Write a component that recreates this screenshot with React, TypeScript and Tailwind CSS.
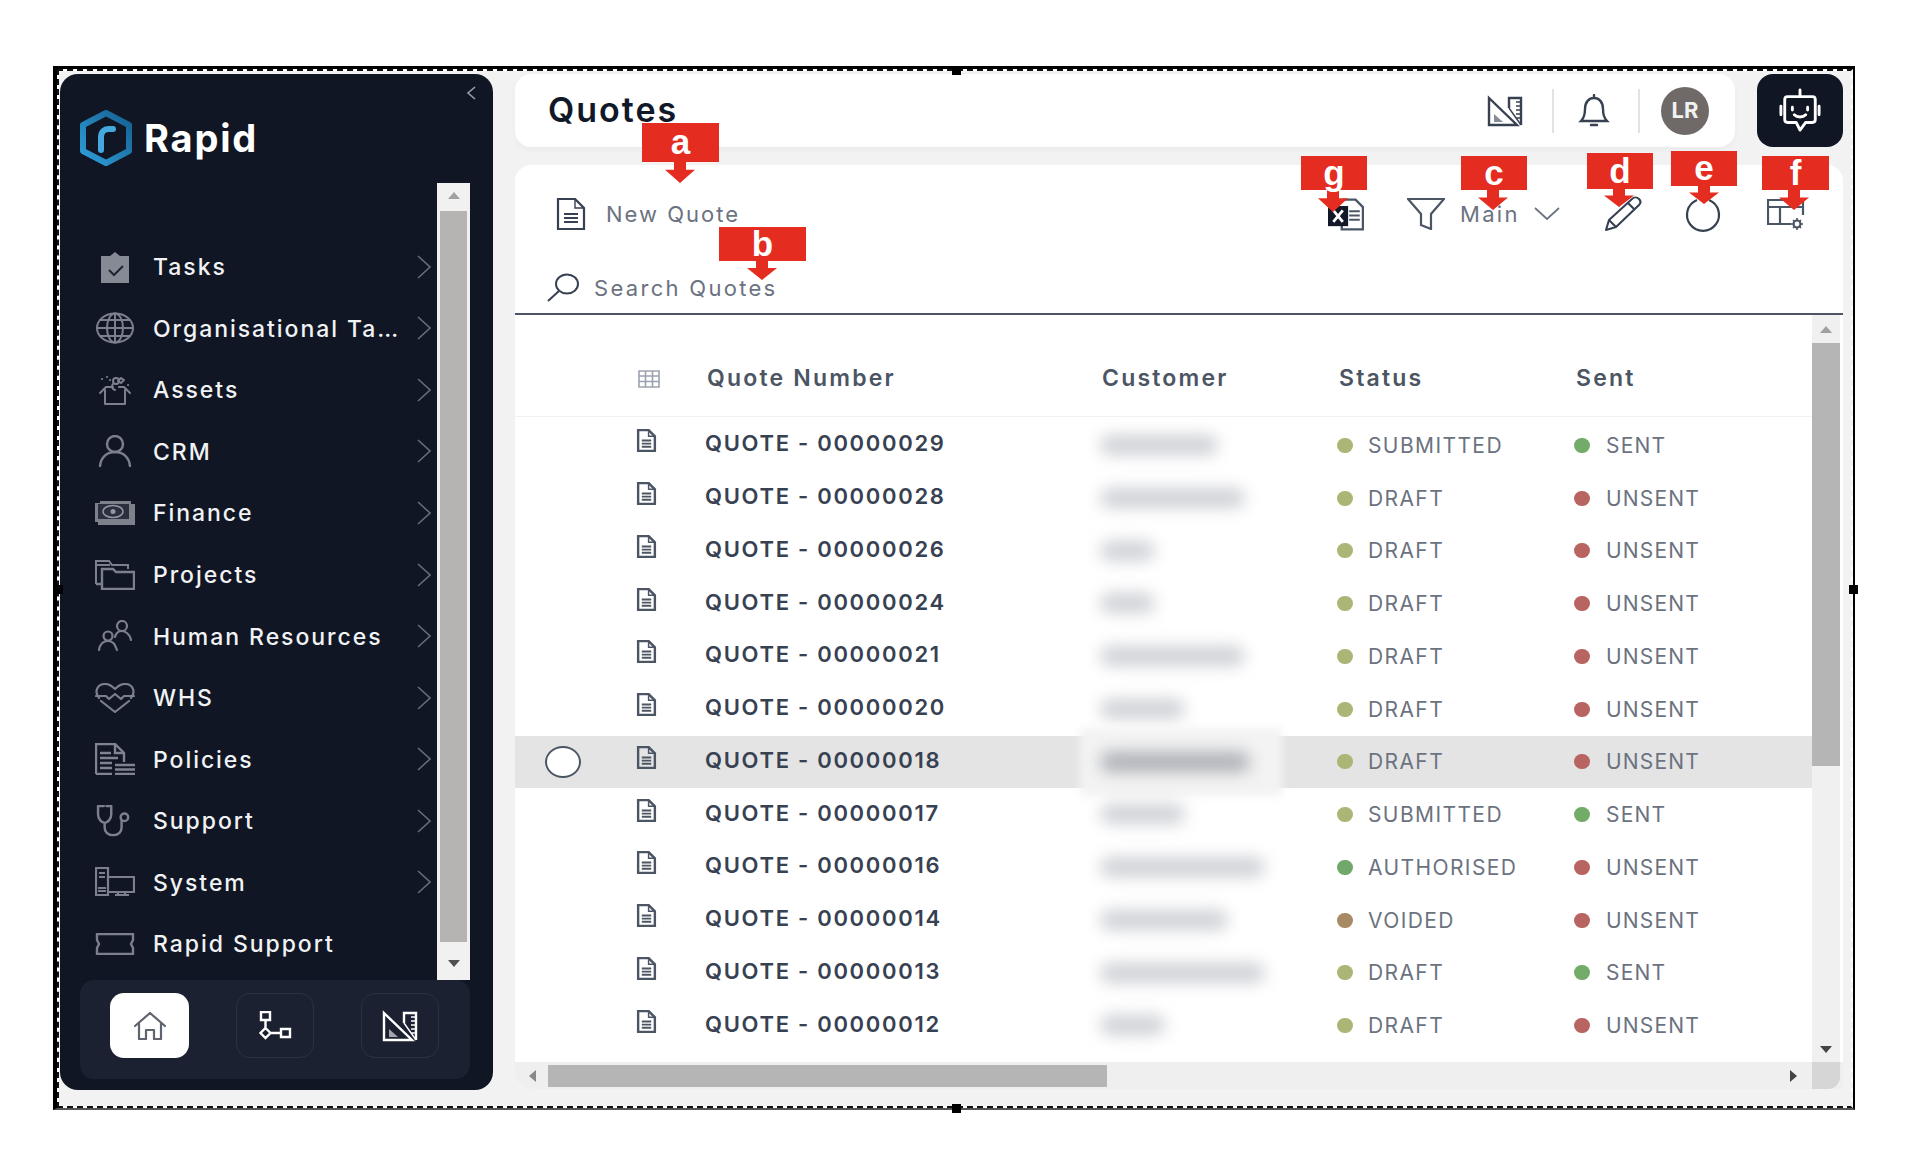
import React from "react";

const S = (p: React.SVGProps<SVGSVGElement>) => <svg fill="none" stroke="currentColor" strokeWidth={2} strokeLinecap="round" strokeLinejoin="round" {...p} />;

const Ruler = ({ c = "currentColor", w = 36, h = 32 }: { c?: string; w?: number; h?: number }) => (
  <S viewBox="0 0 36 32" width={w} height={h} stroke={c} strokeLinecap="butt" strokeLinejoin="miter">
    <path d="M2 3 30 30H2Z" strokeWidth={2.4} />
    <path d="M7 19 16 27H7Z" fill={c} opacity={0.6} stroke="none" />
    <path d="M22 13V3H34V30" strokeWidth={2.4} />
    <path d="M22 13 34 30M29 7h5M29 11h5M29 15h5M29 19h5M29 23h5" strokeWidth={1.4} />
  </S>
);

const icons: Record<string, React.ReactNode> = {
  Tasks: (
    <svg viewBox="0 0 32 32" width={32} height={32}>
      <path d="M2 5h9l5-4 5 4h9v27H2Z" fill="#858a95" />
      <path d="M10 19l5 5 9-9" fill="none" stroke="#1d2433" strokeWidth={2} />
    </svg>
  ),
  Org: (
    <S viewBox="0 0 40 32" width={40} height={32}>
      <ellipse cx="20" cy="16" rx="18" ry="14.5" />
      <ellipse cx="20" cy="16" rx="8" ry="14.5" />
      <path d="M2 16h36M5 8h30M5 24h30M20 1.5v29" />
    </S>
  ),
  Assets: (
    <S viewBox="0 0 36 32" width={36} height={32}>
      <path d="M8 16v14h20V16M3 19l6-6h7M33 19l-6-6h-5" />
      <circle cx="19" cy="7" r="3" />
      <path d="M16 10c-2 2-1 5 2 6M24 4l3 2-3 3-3-2ZM5 5h.1M10 3h.1M31 11h.1M13 6h.1" />
    </S>
  ),
  CRM: (
    <S viewBox="0 0 36 32" width={36} height={32} strokeWidth={2.4}>
      <circle cx="18" cy="9" r="8" />
      <path d="M3 31c1-9 7-14 15-14s14 5 15 14" />
    </S>
  ),
  Finance: (
    <svg viewBox="0 0 40 24" width={40} height={24}>
      <path d="M5 0h31v3h4v21H3v-3H0V2h5Z" fill="#7c818c" />
      <rect x="3" y="3" width="31" height="15" fill="#2a3040" />
      <ellipse cx="18" cy="10.5" rx="10" ry="6" fill="none" stroke="#9297a2" strokeWidth={1.5} />
      <circle cx="18" cy="10.5" r="2.5" fill="#9297a2" />
    </svg>
  ),
  Projects: (
    <S viewBox="0 0 40 30" width={40} height={30} strokeLinecap="butt" strokeLinejoin="miter">
      <path d="M1 24V1h13l3 4h16v4M1 5h14" />
      <path d="M7 29V9h11l3 3h18v17ZM1 24h6" strokeWidth={2.4} />
    </S>
  ),
  HR: (
    <S viewBox="0 0 36 32" width={36} height={32} strokeWidth={2.2}>
      <circle cx="25" cy="6" r="5" />
      <path d="M18 17c1-4 4-6 7-6s8 3 9 9" />
      <circle cx="11" cy="16" r="4.5" />
      <path d="M2 30c1-6 4-9 9-9s7 3 9 9" />
    </S>
  ),
  WHS: (
    <S viewBox="0 0 40 30" width={40} height={30} strokeWidth={2.2}>
      <path d="M4 15C-1 9 2 1 10 1c5 0 8 3 10 5 2-2 5-5 10-5 8 0 11 8 6 14" />
      <path d="M1 13h10l3 3 6-5 6 5 3-3h10M6 18l14 11 14-11" />
    </S>
  ),
  Policies: (
    <svg viewBox="0 0 40 32" width={40} height={32} fill="none" stroke="#7f8490" strokeWidth={2.4}>
      <path d="M1 31V1h19l9 9v9" />
      <path d="M20 1v9h9" />
      <path d="M5 10h11M5 15h18M5 20h12M5 25h12M1 31h16" />
      <path d="M20 22h20M20 26.5h20M20 31h20" strokeWidth={2.6} />
    </svg>
  ),
  Support: (
    <S viewBox="0 0 40 34" width={38} height={32} strokeWidth={2.6}>
      <path d="M8 1H2v9c0 5 4 9 7 9s7-4 7-9V1h-5" />
      <path d="M9 19v5c0 4 3 8 9 8s9-4 9-8v-7" />
      <circle cx="30" cy="13" r="4" />
    </S>
  ),
  System: (
    <S viewBox="0 0 40 30" width={40} height={30} strokeLinecap="butt" strokeLinejoin="miter" strokeWidth={2.2}>
      <path d="M1 1h12v27H1ZM4 6h6M4 10h6M3 21h8M3 24h8" />
      <path d="M13 10h26v15H13M20 28h14M23 25v3M30 25v3" />
    </S>
  ),
  Rapid: (
    <S viewBox="0 0 40 22" width={40} height={22} strokeLinecap="butt" strokeLinejoin="miter" strokeWidth={2.4}>
      <path d="M2 1h36v6l-2 4 2 4v6H2v-6l2-4-2-4Z" />
    </S>
  ),
};

const menu: [string, string, boolean][] = [
  ["Tasks", "Tasks", true],
  ["Org", "Organisational Ta…", true],
  ["Assets", "Assets", true],
  ["CRM", "CRM", true],
  ["Finance", "Finance", true],
  ["Projects", "Projects", true],
  ["HR", "Human Resources", true],
  ["WHS", "WHS", true],
  ["Policies", "Policies", true],
  ["Support", "Support", true],
  ["System", "System", true],
  ["Rapid", "Rapid Support", false],
];

const rows: [string, number, string, string][] = [
  ["00000029", 118, "SUBMITTED", "SENT"],
  ["00000028", 145, "DRAFT", "UNSENT"],
  ["00000026", 55, "DRAFT", "UNSENT"],
  ["00000024", 55, "DRAFT", "UNSENT"],
  ["00000021", 145, "DRAFT", "UNSENT"],
  ["00000020", 85, "DRAFT", "UNSENT"],
  ["00000018", 150, "DRAFT", "UNSENT"],
  ["00000017", 85, "SUBMITTED", "SENT"],
  ["00000016", 165, "AUTHORISED", "UNSENT"],
  ["00000014", 128, "VOIDED", "UNSENT"],
  ["00000013", 165, "DRAFT", "SENT"],
  ["00000012", 65, "DRAFT", "UNSENT"],
];

const Doc = () => (
  <svg viewBox="0 0 20 22" width={21} height={23} fill="none" stroke="#4b5563" strokeWidth={2.3}>
    <path d="M2 1h10l6 6v14H2Z" />
    <path d="M12 1v6h6" strokeWidth={1.4} />
    <path d="M5.5 11h9M5.5 14h9M5.5 17h9" strokeWidth={1.8} />
  </svg>
);

const Tag = ({ label, x, y, w, h, tip, tipX }: { label: string; x: number; y: number; w: number; h: number; tip: number; tipX: number }) => (
  <div className="absolute z-10" style={{ left: x, top: y, width: w, height: tip - y }}>
    <div className="flex items-center justify-center bg-[#e42c20] text-white font-bold text-[35px] leading-none font-['Liberation_Sans',sans-serif]" style={{ height: h }}>
      <span className="relative z-10 -mt-[2px]">{label}</span>
    </div>
    <svg className="absolute" style={{ left: tipX - x - 15, top: h - 1 }} width={30} height={tip - y - h + 1} viewBox="0 0 30 20" preserveAspectRatio="none">
      <path d="M9 0h12v8h9L15 20 0 8h9Z" fill="#e42c20" />
    </svg>
  </div>
);

const Handle = ({ cls }: { cls: string }) => <div className={`absolute z-20 h-[9px] w-[9px] bg-black ${cls}`} />;

const Tri = ({ d, c = "#6b6b6b" }: { d: "u" | "d" | "l" | "r"; c?: string }) => {
  const p = { u: "M0 8 6 1l6 7Z", d: "M0 2h12L6 9Z", l: "M9 0v12L2 6Z", r: "M2 0v12l7-6Z" }[d];
  return (
    <svg width={12} height={12} viewBox="0 0 12 12">
      <path d={p} fill={c} />
    </svg>
  );
};

export default function App() {
  return (
    <div className="h-[1168px] w-[1914px] overflow-hidden bg-white pl-[53px] pt-[66px] font-['Inter',sans-serif]">
      <div className="relative h-[1044px] w-[1802px] border-b-[2px] border-l-[4px] border-r-[2px] border-t-[3px] border-b-[#555] border-l-black border-r-black border-t-black">
        <Handle cls="left-[895px] -top-[3px]" />
        <Handle cls="-left-[3px] top-[516px]" />
        <Handle cls="-right-[5px] top-[516px]" />
        <Handle cls="left-[895px] -bottom-[5px]" />
        <Tag label="a" x={585} y={54} w={77} h={39} tip={114} tipX={623} />
        <Tag label="b" x={662} y={158} w={87} h={34} tip={211} tipX={705} />
        <Tag label="g" x={1244} y={87} w={66} h={34} tip={143} tipX={1276} />
        <Tag label="c" x={1404} y={87} w={66} h={34} tip={141} tipX={1436} />
        <Tag label="d" x={1530} y={84} w={66} h={36} tip={138} tipX={1562} />
        <Tag label="e" x={1614} y={82} w={66} h={35} tip={135} tipX={1647} />
        <Tag label="f" x={1705} y={87} w={67} h={34} tip={141} tipX={1737} />

        <div className="flex h-full w-full gap-[22px] border-2 border-dashed border-[#111] border-r-[#f2f2f2] bg-[#f2f2f2] bg-clip-padding pl-[1px] pt-[3px]">
          {/* Sidebar */}
          <aside className="flex h-[1016px] w-[433px] shrink-0 flex-col rounded-[18px] bg-[#101624] text-[#f1f2f4]">
            <div className="relative flex h-[109px] shrink-0 items-start pl-[19px] pt-[36px]">
              <svg className="absolute right-[16px] top-[11px] text-[#9aa0aa]" width={12} height={16} viewBox="0 0 12 16" fill="none" stroke="currentColor" strokeWidth={1.6}>
                <path d="M10 2 3 8l7 6" />
              </svg>
              <svg width={54} height={56} viewBox="0 0 54 56" fill="none">
                <defs>
                  <linearGradient id="lg" x1="0" y1="1" x2="1" y2="0">
                    <stop offset="0" stopColor="#2f9ed8" />
                    <stop offset="1" stopColor="#155f92" />
                  </linearGradient>
                </defs>
                <path d="M27 3 50 15v26L27 53 4 41V15Z" stroke="url(#lg)" strokeWidth={6} strokeLinejoin="round" />
                <path d="M22 40V27c0-6 4-8 8-8h4" stroke="#45a9de" strokeWidth={6} strokeLinecap="round" />
              </svg>
              <span className="ml-[11px] mt-[6px] text-[38px] font-bold leading-[44px] tracking-[1.8px] text-white">Rapid</span>
            </div>
            <div className="flex min-h-0 flex-1">
              <nav className="min-w-0 flex-1 pt-[53px]">
                {menu.map(([k, label, arrow]) => (
                  <div key={k} className="flex h-[61.55px] items-center pl-[32px] pr-[6px]">
                    <div className="flex w-[45px] shrink-0 items-center justify-center text-[#7b808c]">{icons[k]}</div>
                    <span className="ml-[16px] mt-[2px] whitespace-nowrap text-[23px] font-medium leading-none tracking-[1.95px]">{label}</span>
                    {arrow && (
                      <svg className="ml-auto shrink-0 text-[#666c78]" width={14} height={24} viewBox="0 0 14 24" fill="none" stroke="currentColor" strokeWidth={1.6}>
                        <path d="M1 1l12 11L1 23" />
                      </svg>
                    )}
                  </div>
                ))}
              </nav>
              <div className="mr-[23px] flex w-[33px] shrink-0 flex-col items-center bg-[#f1f1f1]">
                <div className="flex h-[28px] items-center"><Tri d="u" c="#a0a0a0" /></div>
                <div className="h-[731px] w-[27px] bg-[#b5b4b3]" />
                <div className="flex flex-1 items-center pt-[6px]"><Tri d="d" c="#505050" /></div>
              </div>
            </div>
            <div className="mb-[11px] ml-[20px] flex h-[99px] w-[390px] shrink-0 items-start gap-[47px] rounded-[14px] bg-[#1b2130] pl-[30px] pt-[13px]">
              <div className="flex h-[65px] w-[79px] items-center justify-center rounded-[14px] bg-white text-[#5f6470]">
                <S viewBox="0 0 32 28" width={32} height={28} strokeWidth={2.2}>
                  <path d="M1 14 16 1l15 13M5 11v16h7v-9h8v9h7V11" />
                </S>
              </div>
              <div className="flex h-[65px] w-[78px] items-center justify-center rounded-[14px] border border-[#2b3140] text-white">
                <S viewBox="0 0 34 30" width={34} height={30} strokeWidth={2.4} strokeLinecap="butt" strokeLinejoin="miter">
                  <path d="M3 1h9v8H3ZM7.5 9v8M7.5 17l5 5-5 5-5-5ZM12.5 22H23M23 18h9v8h-9Z" />
                </S>
              </div>
              <div className="flex h-[65px] w-[78px] items-center justify-center rounded-[14px] border border-[#2b3140] text-white">
                <Ruler />
              </div>
            </div>
          </aside>

          {/* Main */}
          <div className="flex w-[1328px] shrink-0 flex-col gap-[18px]">
            <div className="flex h-[73px] gap-[22px]">
              <header className="flex w-[1220px] items-center rounded-[16px] bg-white pl-[33px] shadow-[0_3px_6px_rgba(0,0,0,0.03)]">
                <h1 className="-mt-[2px] text-[34px] font-semibold leading-none tracking-[2px] text-[#111827]">Quotes</h1>
                <div className="ml-auto text-[#374151]"><Ruler /></div>
                <div className="ml-[29px] h-[44px] w-[2px] bg-[#e2e2e2]" />
                <svg className="ml-[24px] text-[#374151]" width={32} height={34} viewBox="0 0 32 34" fill="none" stroke="currentColor" strokeWidth={2.4}>
                  <path d="M16 1v3M3 27c3-3 4-6 4-12 0-7 4-11 9-11s9 4 9 11c0 6 1 9 4 12ZM13 31h6" strokeLinecap="round" />
                </svg>
                <div className="ml-[28px] h-[44px] w-[2px] bg-[#e2e2e2]" />
                <div className="ml-[21px] flex h-[48px] w-[48px] items-center justify-center rounded-full bg-[#6f6a68] text-[22px] font-bold text-[#f1f1f1]">LR</div>
                <div className="w-[26px]" />
              </header>
              <div className="flex w-[86px] items-center justify-center rounded-[16px] bg-[#101624]">
                <S viewBox="0 0 44 48" width={42} height={46} className="text-white" strokeWidth={3}>
                  <path d="M22 2v7M9 9h26c2 0 3 1 3 3v21c0 2-1 3-3 3h-7l-6 8-4-8H9c-2 0-3-1-3-3V12c0-2 1-3 3-3Z" />
                  <path d="M2 19v9M42 19v9M14 20v3M30 20v3M16 28c3 3 9 3 12 0" />
                </S>
              </div>
            </div>

            <section className="flex h-[924px] flex-col rounded-[16px] bg-white">
              <div className="h-[150px] shrink-0 border-b-2 border-[#4b5563]">
                <div className="flex h-[98px] items-center">
                  <svg className="ml-[41px]" width={30} height={32} viewBox="0 0 30 32" fill="none" stroke="#374151" strokeWidth={2.2}>
                    <path d="M2 1h17l9 9v21H2Z" />
                    <path d="M19 1v9h9" strokeWidth={1.4} />
                    <path d="M8 16h14M8 20h14M8 24h14" />
                  </svg>
                  <span className="ml-[20px] w-[136px] whitespace-nowrap text-[22px] leading-none tracking-[2px] text-[#6b7280]">New Quote</span>
                  <svg className="ml-[586px] text-[#1f2937]" width={36} height={33} viewBox="0 0 34 30" fill="none">
                    <path d="M14 1h12l7 7v21H13v-6" stroke="#4b5563" strokeWidth={2.2} />
                    <path d="M20 12h10M20 16h10M20 20h10" stroke="#4b5563" strokeWidth={1.8} />
                    <rect x="0" y="7" width="19" height="19" fill="#111827" />
                    <path d="M5 11l9 11M14 11l-9 11" stroke="#fff" strokeWidth={2.6} />
                  </svg>
                  <svg className="ml-[43px] text-[#4b5563]" width={38} height={32} viewBox="0 0 38 32" fill="none" stroke="currentColor" strokeWidth={2.2}>
                    <path d="M1 1h36L24 16v15l-10-4V16Z" />
                  </svg>
                  <span className="ml-[15px] text-[22px] leading-none tracking-[2.3px] text-[#6b7280]">Main</span>
                  <svg className="ml-[14px] text-[#6b7280]" width={26} height={14} viewBox="0 0 26 14" fill="none" stroke="currentColor" strokeWidth={1.7}>
                    <path d="M1 1l12 11L25 1" />
                  </svg>
                  <svg className="ml-[44px] text-[#374151]" width={38} height={36} viewBox="0 0 38 36" fill="none" stroke="currentColor" strokeWidth={2.1} strokeLinejoin="round">
                    <path d="M28 3c2-2 5-2 7 0s2 4 0 6L12 31l-10 3 3-10ZM24 7l7 7M5 24l7 7" />
                  </svg>
                  <svg className="ml-[42px] text-[#374151]" width={38} height={36} viewBox="0 0 38 36" fill="none" stroke="currentColor" strokeWidth={2.2}>
                    <path d="M13 4a16 16 0 1 0 12 0" />
                  </svg>
                  <svg className="ml-[45px] text-[#4b5563]" width={38} height={34} viewBox="0 0 38 34" fill="none" stroke="currentColor" strokeWidth={2.2}>
                    <path d="M24 27H1V3h35v15M1 10h35M13 10v17" />
                    <circle cx="30" cy="27" r="3.5" />
                    <path d="M30 21v2M30 31v2M24 27h2M34 27h2M26 23l1.5 1.5M34 23l-1.5 1.5M26 31l1.5-1.5M34 31l-1.5-1.5" strokeWidth={1.6} />
                  </svg>
                </div>
                <div className="flex h-[50px] items-center">
                  <svg className="ml-[31px]" width={34} height={30} viewBox="0 0 34 30" fill="none" stroke="#374151" strokeWidth={2}>
                    <ellipse cx="21" cy="11" rx="11" ry="9.5" />
                    <path d="M13 18 2 28" />
                  </svg>
                  <span className="ml-[14px] whitespace-nowrap text-[22px] leading-none tracking-[2.3px] text-[#6b7280]">Search Quotes</span>
                </div>
              </div>

              <div className="flex min-h-0 flex-1">
                <div className="w-[1297px] shrink-0">
                  <div className="mb-[2px] grid h-[102px] grid-cols-[190px_393px_239px_237px_1fr] items-center border-b border-[#f1f1f1] pt-[26px] text-[23px] font-semibold leading-none tracking-[2.2px] text-[#4b5563]">
                    <div className="pl-[123px]">
                      <svg width={22} height={18} viewBox="0 0 22 18" fill="none" stroke="#9ca3af" strokeWidth={1.6}>
                        <path d="M1 1h20v16H1ZM1 6h20M1 11.5h20M7.5 1v16M14.5 1v16" />
                      </svg>
                    </div>
                    <div className="pl-[2px]">Quote Number</div>
                    <div className="pl-[4px]">Customer</div>
                    <div className="pl-[2px]">Status</div>
                    <div className="pl-[2px]">Sent</div>
                  </div>
                  {rows.map(([num, blur, status, sent], i) => {
                    const hl = i === 6;
                    const sc = status === "AUTHORISED" ? "bg-[#6fa86a]" : status === "VOIDED" ? "bg-[#a78a63]" : "bg-[#aab676]";
                    return (
                      <div key={num} className={`grid h-[52.75px] grid-cols-[190px_393px_239px_237px_1fr] items-center ${hl ? "bg-[#e4e4e4]" : ""}`}>
                        <div className="flex items-center">
                          <div className="w-[121px] shrink-0 pl-[30px]">
                            {hl && <div className="h-[32px] w-[36px] rounded-[50%] border-2 border-[#4b5563] bg-white" />}
                          </div>
                          <div className="mb-[9px]"><Doc /></div>
                        </div>
                        <div className="mb-[4px] whitespace-nowrap text-[22px] font-semibold leading-none tracking-[1.7px] text-[#374151]">QUOTE - {num}</div>
                        <div className="relative h-full">
                          {hl && <div className="absolute -left-[18px] -top-[8px] h-[68px] w-[202px] bg-[#f3f3f3] blur-[4px]" />}
                          <div className="absolute left-[2px] top-[16px] h-[20px] rounded-full blur-[8px] bg-[#cfd1d6]" style={{ width: blur, background: hl ? "#adb0b6" : undefined }} />
                        </div>
                        <div className="flex items-center">
                          <div className={`h-[15px] w-[16px] rounded-full ${sc}`} />
                          <span className="ml-[15px] whitespace-nowrap text-[21px] leading-none tracking-[1.4px] text-[#6b7280]">{status}</span>
                        </div>
                        <div className="flex items-center">
                          <div className={`h-[15px] w-[16px] rounded-full ${sent === "SENT" ? "bg-[#73ab69]" : "bg-[#b86461]"}`} />
                          <span className="ml-[16px] whitespace-nowrap text-[21px] leading-none tracking-[1.2px] text-[#6b7280]">{sent}</span>
                        </div>
                      </div>
                    );
                  })}
                </div>
                <div className="flex w-[28px] shrink-0 flex-col items-center bg-[#f0f0f0] pt-[4px]">
                  <div className="flex h-[24px] items-center"><Tri d="u" c="#a0a0a0" /></div>
                  <div className="h-[423px] w-full bg-[#b5b5b5]" />
                  <div className="mt-auto flex h-[24px] items-center"><Tri d="d" c="#444" /></div>
                </div>
              </div>

              <div className="flex h-[27px] shrink-0 items-center rounded-bl-[16px] bg-[#efefef]">
                <div className="flex w-[33px] shrink-0 justify-center pl-[2px]"><Tri d="l" c="#888" /></div>
                <div className="h-[22px] w-[559px] bg-[#b5b5b5]" />
                <div className="ml-[674px] flex w-[25px] justify-center"><Tri d="r" c="#444" /></div>
                <div className="ml-[6px] h-full w-[28px] rounded-br-[12px] bg-[#d6d6d6]" />
              </div>
            </section>
          </div>
        </div>
      </div>
    </div>
  );
}
